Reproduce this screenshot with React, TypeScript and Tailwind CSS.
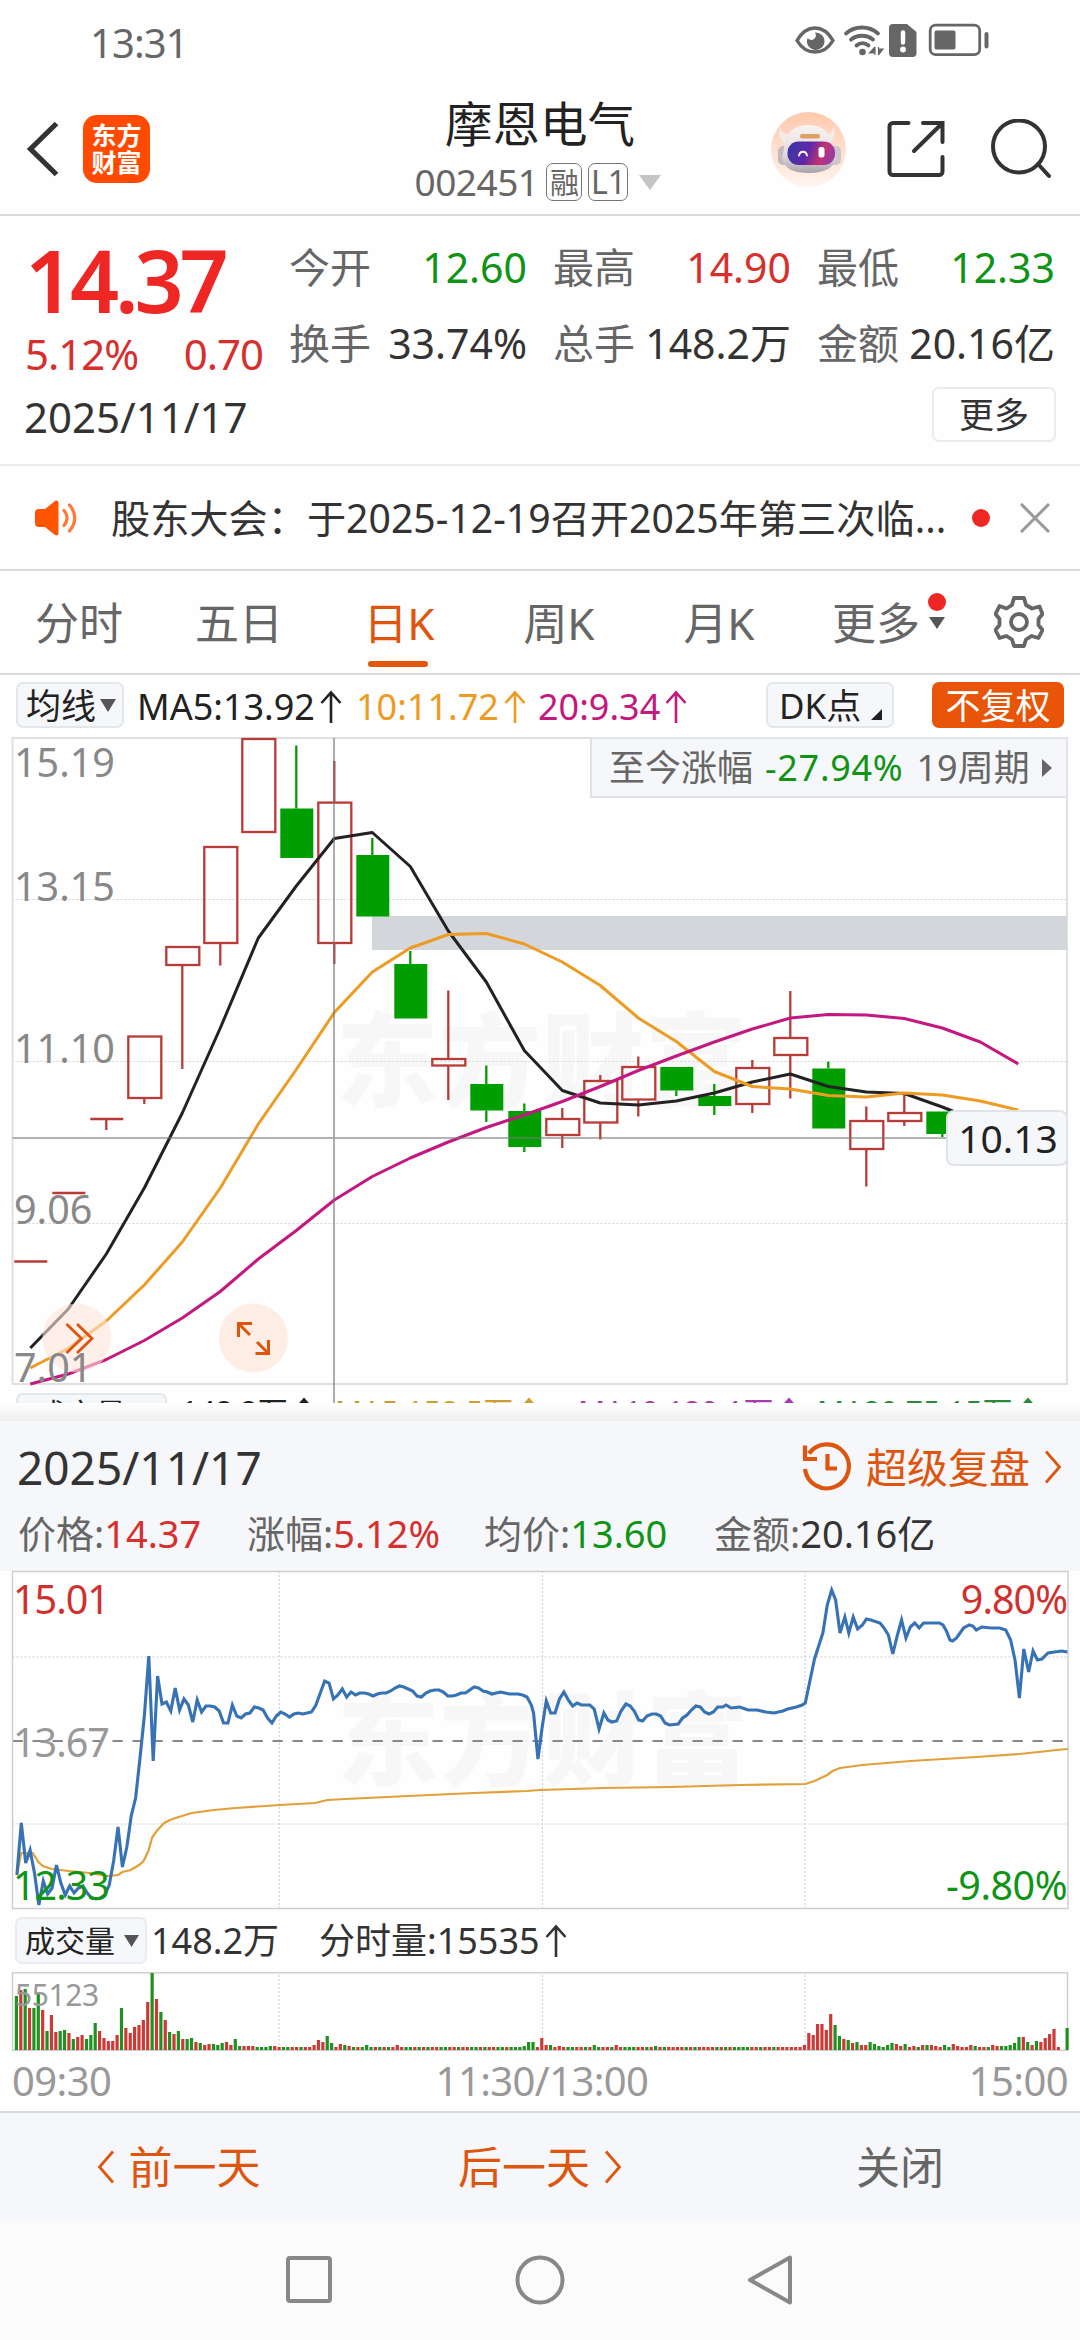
import React from 'react';

const RED = '#b93b38';
const GREEN = '#009e00';

const ArrowUp = () => (
  <svg viewBox="0 0 22 34" className="w-[22px] h-[34px] ml-[5px] shrink-0" fill="none" stroke="currentColor" strokeWidth={2.6}>
    <path d="M11 33V3M1.5 13L11 2.5L20.5 13" />
  </svg>
);

const ArrowLeft = () => (
  <svg viewBox="0 0 18 34" className="w-[18px] h-[34px]" fill="none" stroke="currentColor" strokeWidth={2.8}>
    <path d="M16 1.5L2.5 17L16 32.5" />
  </svg>
);

const ArrowRight = () => (
  <svg viewBox="0 0 18 34" className="w-[18px] h-[34px]" fill="none" stroke="currentColor" strokeWidth={2.8}>
    <path d="M2 1.5L15.5 17L2 32.5" />
  </svg>
);

const StatusBar = () => (
  <div className="h-[84px] flex items-center justify-between pl-[90px] pr-[90px] text-[#666]">
    <span className="text-[40px] tracking-[-0.9px] mt-px">13:31</span>
    <svg viewBox="0 0 196 36" className="w-[196px] h-[36px] -mt-[3px]" fill="none">
      <path d="M3 17.5C8 9 14 5 21 5s13 4 18 12.500c-5 8.500-11 11.500-18 11.500s-13-3-18-11.500z" stroke="#666" strokeWidth={3.4} />
      <path d="M21 9.500a4.500 4.500 0 0 1-7.500 5.500a8.800 8.800 0 1 0 7.500-5.500z" fill="#666" />
      <g stroke="#666" strokeWidth={3.8} strokeLinecap="round">
        <path d="M52 10.500c9-8 23-8 32 0" />
        <path d="M57 16.500c6.500-5 15.500-5 22 0" />
        <path d="M62.500 22.500c3.500-3 8.500-3 12 0" />
      </g>
      <circle cx="68.500" cy="29" r="3.300" fill="#666" />
      <path d="M81 24v8M81 24l-5.500 6h5.500M84.500 32v-8M84.500 32l4.500-6h-4.500" fill="#666" stroke="#666" strokeWidth={1.200} />
      <path d="M99 1h14l9.500 8v21a4 4 0 0 1-4 4h-19.500a4 4 0 0 1-4-4v-25a4 4 0 0 1 4-4z" fill="#666" />
      <path d="M109 9.500v10" stroke="#fff" strokeWidth={4.400} strokeLinecap="round" />
      <circle cx="109" cy="26.500" r="2.900" fill="#fff" />
      <rect x="136.200" y="2.200" width="49.500" height="29.500" rx="5.500" stroke="#666" strokeWidth={2.800} />
      <rect x="140.500" y="7.500" width="21" height="19" rx="2" fill="#666" />
      <rect x="190.500" y="9" width="4" height="16.500" rx="2" fill="#666" />
    </svg>
  </div>
);

const RobotIcon = () => (
  <svg viewBox="0 0 75 75" className="w-[75px] h-[75px]">
    <defs>
      <linearGradient id="halo" x1="0" y1="0" x2="0" y2="1">
        <stop offset="0" stopColor="#fec9ac" />
        <stop offset="1" stopColor="#fff5f0" />
      </linearGradient>
      <linearGradient id="visor" x1="0" y1="0" x2="1" y2="0.2">
        <stop offset="0" stopColor="#3438a6" />
        <stop offset="0.5" stopColor="#6127a8" />
        <stop offset="0.8" stopColor="#c2326f" />
        <stop offset="1" stopColor="#9c3aa0" />
      </linearGradient>
      <linearGradient id="shell" x1="0" y1="0" x2="0" y2="1">
        <stop offset="0" stopColor="#f8f3f2" />
        <stop offset="0.6" stopColor="#e4dde0" />
        <stop offset="1" stopColor="#aaa3ac" />
      </linearGradient>
    </defs>
    <circle cx="37.5" cy="37.500" r="37.500" fill="url(#halo)" />
    <path d="M9 15c-2 6 0 13 6 17l8-9c-8 1-12-2-14-8zM63 13c2 7 0 14-5 19l-8-9c8 1 12-3 13-10z" fill="#f3ebea" />
    <rect x="7" y="34" width="13" height="19" rx="5" fill="#c2babf" />
    <rect x="57" y="34" width="13" height="19" rx="5" fill="#cdc5cb" />
    <path d="M14.500 29C17 17 27 13 38 13s20 5 22.500 16l4.500 16c-1 11-12 16-27 16S13 57 11 46z" fill="url(#shell)" />
    <rect x="29" y="22" width="20" height="4.500" rx="2" fill="#e0a062" />
    <rect x="16.500" y="29.500" width="47.500" height="23.500" rx="11" fill="url(#visor)" />
    <path d="M28 43.500c1-5 7-5 8 0" fill="none" stroke="#fff" strokeWidth={1.800} strokeLinecap="round" />
    <rect x="47.500" y="35" width="6" height="10.500" rx="2.500" fill="#fff" />
  </svg>
);

const Header = () => (
  <div className="h-[132px] border-b-2 border-[#dcdcdc] grid grid-cols-[410px_256px_1fr]">
    <div className="flex items-center pl-[26px]">
      <svg viewBox="0 0 34 56" className="w-[34px] h-[56px]" fill="none" stroke="#333" strokeWidth={5.200}>
        <path d="M30.500 2.500L4.500 28L30.500 53.500" />
      </svg>
      <div className="ml-[23px] w-[67px] h-[68px] rounded-[14px] bg-[#ff4a00] text-white font-bold text-[25px] leading-[27px] flex flex-col items-center justify-center">
        <span>东方</span>
        <span>财富</span>
      </div>
    </div>
    <div className="flex flex-col items-center pt-[16px]">
      <div className="text-[47.500px] text-[#222] leading-[48px] ml-[4px] whitespace-nowrap">摩恩电气</div>
      <div className="mt-[14px] h-[40px] flex items-center text-[#666]">
        <span className="text-[37px] tracking-[-0.5px] -mt-px">002451</span>
        <span className="ml-[8px] w-[36px] h-[38px] rounded-[7px] border border-[#777] text-[29px] flex items-center justify-center">融</span>
        <span className="ml-[6px] w-[40px] h-[38px] rounded-[7px] border border-[#777] text-[32px] flex items-center justify-center">L1</span>
        <svg viewBox="0 0 22 15" className="ml-[11px] w-[22px] h-[15px]"><path d="M0 0h22l-11 15z" fill="#c4c4c4" /></svg>
      </div>
    </div>
    <div className="flex items-center justify-end pr-[29px]">
      <RobotIcon />
      <svg viewBox="0 0 58 58" className="ml-[41px] w-[58px] h-[58px]" fill="none" stroke="#333" strokeWidth={4} strokeLinecap="round">
        <path d="M21.500 3H6a3.500 3.500 0 0 0-3.500 3.500v45A3.500 3.500 0 0 0 6 55h46a3.500 3.500 0 0 0 3.500-3.500V37M36 3h19.500v19M55 3.500L27 31" />
      </svg>
      <svg viewBox="0 0 60 60" className="ml-[46px] w-[60px] h-[60px]" fill="none" stroke="#333" strokeWidth={4} strokeLinecap="round">
        <circle cx="28" cy="27.500" r="26" />
        <path d="M47 45L58 57" />
      </svg>
    </div>
  </div>
);

const quotes = [
  { label: '今开', value: '12.60', color: 'text-[#0f9415]' },
  { label: '最高', value: '14.90', color: 'text-[#d6302e]' },
  { label: '最低', value: '12.33', color: 'text-[#0f9415]' },
  { label: '换手', value: '33.74%', color: 'text-[#333]' },
  { label: '总手', value: '148.2万', color: 'text-[#333]' },
  { label: '金额', value: '20.16亿', color: 'text-[#333]' },
];

const QuotePanel = () => (
  <div className="h-[250px] border-b-2 border-[#ececec]">
    <div className="flex h-[171px]">
      <div className="w-[289px] pl-[25px]">
        <div className="mt-[21px] text-[86px] tracking-[-4.2px] font-semibold text-[#ee2624]">14.37</div>
        <div className="mt-[11px] h-[40px] flex items-center justify-between pr-[26px] text-[42px] text-[#d6302e]">
          <span className="tracking-[-1px]">5.12%</span>
          <span className="tracking-[-1px]">0.70</span>
        </div>
      </div>
      <div className="grid grid-cols-3 gap-x-[26px] w-[766px] h-[152px] mt-[13px]">
        {quotes.map((q) => (
          <div key={q.label} className="flex items-center justify-between whitespace-nowrap">
            <span className="text-[41px] text-[#666]">{q.label}</span>
            <span className={`text-[41px] ${q.color}`}>{q.value}</span>
          </div>
        ))}
      </div>
    </div>
    <div className="h-[55px] flex items-center justify-between pl-[24px] pr-[24px]">
      <span className="text-[42px] text-[#333] mt-[4px]">2025/11/17</span>
      <span className="w-[124px] h-[55px] rounded-[7px] border-2 border-[#ebebeb] text-[35px] text-[#333] flex items-center justify-center">更多</span>
    </div>
  </div>
);

const NoticeBar = () => (
  <div className="h-[105px] border-b-2 border-[#dcdcdc] flex items-center pl-[33px] whitespace-nowrap">
    <svg viewBox="0 0 44 38" className="w-[44px] h-[38px]" fill="none">
      <path d="M2 14a4 4 0 0 1 4-4h6L22 2c2-1 3.500 0 3.500 2v30c0 2-1.500 3-3.500 2l-10-8H6a4 4 0 0 1-4-4z" fill="#ff5500" />
      <path d="M31 11.500c4 4.500 4 10.500 0 15M36.500 6c7 8 7 18 0 26" stroke="#ff7a3a" strokeWidth={3.200} strokeLinecap="round" />
    </svg>
    <span className="ml-[34px] w-[835px] text-[39.200px] text-[#333]">股东大会：于2025-12-19召开2025年第三次临...</span>
    <span className="ml-[26px] w-[18px] h-[18px] rounded-full bg-[#ee2624]" />
    <svg viewBox="0 0 30 30" className="ml-[30px] w-[30px] h-[30px]" stroke="#999" strokeWidth={3}>
      <path d="M1 1L29 29M29 1L1 29" />
    </svg>
  </div>
);

const tabs = ['分时', '五日', '日K', '周K', '月K'];

const GearIcon = () => (
  <svg viewBox="0 0 50 52" className="w-[50px] h-[52px]" fill="none" stroke="#666" strokeWidth={3.800} strokeLinejoin="round">
    <path d="M20 2h10l2 7l6 3.500l7.500-2l3 7.500l-4 5v6l4 5l-4 8l-7-2l-5.500 3.500l-2 6.500H20l-2-6.500l-5.500-3.500l-7 2l-4-8l4-5v-6l-4-5l4-8l7 2.500l5.500-3.500z" />
    <circle cx="25" cy="26" r="8" />
  </svg>
);

const Tabs = () => (
  <div className="h-[104px] border-b-2 border-[#dcdcdc] flex text-[#666] text-[44px] whitespace-nowrap">
    {tabs.map((tab) => (
      <div key={tab} className={`w-[160px] h-full relative flex items-center justify-center pt-[2px] pr-[2px] ${tab === '日K' ? 'text-[#de560d]' : ''}`}>
        {tab}
        {tab === '日K' && <span className="absolute bottom-[6px] left-[48px] w-[60px] h-[6px] rounded-full bg-[#e4570b]" />}
      </div>
    ))}
    <div className="flex items-center pl-[32px]">
      <span className="pt-[2px]">更多</span>
      <div className="ml-[7px] w-[19px] h-full flex flex-col items-center pt-[22px]">
        <span className="w-[18px] h-[18px] rounded-full bg-[#ee2624]" />
        <svg viewBox="0 0 16 12" className="mt-[6px] w-[16px] h-[12px]"><path d="M0 0h16l-8 12z" fill="#555" /></svg>
      </div>
      <div className="ml-[48px]"><GearIcon /></div>
    </div>
  </div>
);

const IndicatorRow = () => (
  <div className="h-[61px] pt-[7px] flex whitespace-nowrap">
    <div className="ml-[16px] w-[108px] h-[46px] rounded-[7px] border-2 border-[#e4e7ea] bg-[#f6f7fa] flex items-center pl-[8px] text-[35px] text-[#222]">
      均线
      <svg viewBox="0 0 16 13" className="ml-[4px] w-[16px] h-[13px]"><path d="M0 0h16l-8 13z" fill="#555" /></svg>
    </div>
    <div className="ml-[13px] mt-[2px] flex items-center text-[36px] h-[46px]">
      <span className="w-[219px] flex items-center text-[#222]">MA5:13.92<ArrowUp /></span>
      <span className="w-[182px] flex items-center text-[#ed9b22]">10:11.72<ArrowUp /></span>
      <span className="flex items-center text-[#c3187e]">20:9.34<ArrowUp /></span>
    </div>
    <div className="ml-auto w-[128px] h-[46px] rounded-[7px] border-2 border-[#e4e7ea] bg-[#f6f7fa] flex items-center pl-[11px] text-[35px] text-[#222]">
      DK点
      <svg viewBox="0 0 11 11" className="ml-[10px] mt-[18px] w-[11px] h-[11px]"><path d="M11 0v11H0z" fill="#222" /></svg>
    </div>
    <div className="ml-[38px] mr-[16px] w-[132px] h-[46px] rounded-[7px] bg-[#e85408] text-white text-[35px] flex items-center justify-center">不复权</div>
  </div>
);

// [open/close top, bottom, high, low, rising] in chart pixels
const candles: [number, number, number, number, boolean][] = [
  [1261.5, 1261.5, 1261.5, 1261.5, true],
  [1193, 1193, 1193, 1193, true],
  [1119, 1119, 1119, 1130, true],
  [1036.5, 1098, 1036.5, 1104, true],
  [947, 965, 947, 1069, true],
  [847, 943, 847, 965.5, true],
  [739, 832, 739, 832, true],
  [808.5, 858, 745.5, 858, false],
  [802.6, 943, 761, 964, true],
  [855, 916.5, 838, 916.5, false],
  [964, 1018.5, 951, 1018.5, false],
  [1059, 1065.5, 990.5, 1100, true],
  [1084, 1110.5, 1065.5, 1122, false],
  [1111, 1147, 1103.5, 1152, false],
  [1119, 1135, 1108, 1148, true],
  [1081, 1122.5, 1075, 1139.5, true],
  [1067, 1099.5, 1056.5, 1116.5, true],
  [1067, 1090.5, 1067, 1096, false],
  [1096, 1106, 1084, 1115, false],
  [1068, 1104, 1060, 1113, true],
  [1038, 1055, 991, 1098.5, true],
  [1068.5, 1128.5, 1061.5, 1128.5, false],
  [1121, 1149, 1106.5, 1186.5, true],
  [1113, 1121, 1092, 1126, true],
  [1111.5, 1134, 1111.5, 1137, false],
];

const ma5 = [1348, 1309, 1254, 1188, 1113, 1028, 938, 886, 838.5, 832.5, 866.5, 931, 982, 1050.5, 1090.5, 1103, 1105, 1101, 1093, 1082, 1074, 1086.5, 1092, 1093.5, 1107, 1122];
const ma10 = [1368, 1348.5, 1321, 1285, 1242, 1188, 1124, 1069.5, 1012.5, 972, 948, 934.5, 933.5, 944, 962, 985.5, 1018, 1041.5, 1071.5, 1086.5, 1089, 1095.5, 1097, 1093, 1095, 1101, 1110];
const ma20 = [1384, 1374, 1359.5, 1340.5, 1318, 1291.5, 1259, 1230.5, 1200, 1176.5, 1158, 1142, 1127.5, 1115, 1101.5, 1086.5, 1070.5, 1056, 1042, 1029, 1018, 1014.5, 1015, 1018.5, 1028, 1042, 1064];

const candleX = (i: number) => 30.3 + i * 38;
const maPoints = (data: number[]) => data.map((y, i) => `${candleX(i)},${y}`).join(' ');

const KLineChart = () => (
  <div className="h-[667px] relative overflow-hidden">
    <svg viewBox="0 736 1080 667" className="w-[1080px] h-[667px] block">
      <text x="336" y="1099" fontWeight="900" fontSize="102" letterSpacing="1" fill="#f7f7f7">东方财富</text>
      <path d="M12.5 899.500H1067M12.5 1061.500H1067M12.5 1223.500H1067" stroke="#d4d4d4" strokeDasharray="2 2" />
      <rect x="12.500" y="738" width="1054.500" height="646" fill="none" stroke="#e0e0e0" strokeWidth={2} />
      <rect x="372" y="916" width="695" height="34" fill="#d3d7db" />
      <g fill="#888" fontSize="39.500">
        <text x="14" y="777">15.19</text>
        <text x="14" y="901">13.15</text>
        <text x="14" y="1062.500">11.10</text>
        <text x="14" y="1224">9.06</text>
      </g>
      {candles.map(([top, bottom, high, low, up], i) => {
        const x = candleX(i);
        return (
          <g key={i} stroke={up ? RED : GREEN} strokeWidth={2.3}>
            {high < top && <path d={`M${x} ${high}V${top}`} />}
            {low > bottom && <path d={`M${x} ${bottom}V${low}`} />}
            {top === bottom ? (
              <path d={`M${x - 16} ${top}h33`} />
            ) : (
              <rect x={x - 16} y={top} width={33} height={bottom - top} fill={up ? 'none' : GREEN} strokeWidth={up ? 2.3 : 0} />
            )}
          </g>
        );
      })}
      <g fill="none" strokeWidth={3} strokeLinejoin="round">
        <polyline points={maPoints(ma5)} stroke="#222" />
        <polyline points={maPoints(ma10)} stroke="#ed9b22" />
        <polyline points={maPoints(ma20)} stroke="#c3187e" />
      </g>
      <path d="M12.5 1138H950M334 738V1403" stroke="#777" strokeOpacity="0.75" strokeWidth={1.600} />
      <circle cx="76.800" cy="1338" r="34.500" fill="#fde4d8" fillOpacity="0.600" />
      <circle cx="253.400" cy="1338" r="34.500" fill="#fde9df" fillOpacity="0.800" />
      <path d="M66.500 1324L81.500 1338.500L66.500 1353M77 1324L92 1338.500L77 1353" fill="none" stroke="#de560d" strokeWidth={2.800} />
      <path d="M238.500 1337V1323.500H252M239 1324L250 1335M255.500 1353.500H268.500V1340M268 1353L257 1342" fill="none" stroke="#de560d" strokeWidth={3} />
      <text x="14" y="1382" fontSize="39.500" fill="#888">7.01</text>
    </svg>
    <div className="absolute top-px right-[12px] w-[478px] h-[61px] bg-[#f6f7fa] border-2 border-[#e2e3e5] flex items-center pl-[17px] text-[36px] text-[#666] whitespace-nowrap">
      <span>至今涨幅</span>
      <span className="ml-[12px] tracking-[0.7px] text-[#0f9415]">-27.94%</span>
      <span className="ml-[13px]">19周期</span>
      <svg viewBox="0 0 10 18" className="ml-[12px] w-[10px] h-[18px]"><path d="M0 0l10 9l-10 9z" fill="#666" /></svg>
    </div>
    <div className="absolute top-[374px] right-[12px] w-[122px] h-[56px] rounded-[8px] bg-[#f6f7fa] border-2 border-[#e0e4e8] flex items-center justify-center pb-[2px] pl-[2px] text-[39px] text-[#222]">10.13</div>
    {/* volume header, cut off by the day sheet below */}
    <div className="absolute top-[657px] left-0 w-full flex items-start text-[30px] whitespace-nowrap">
      <span className="ml-[16px] w-[151px] h-[46px] rounded-[7px] border-2 border-[#e4e7ea] bg-[#f6f7fa] pl-[18px] pt-[4px] text-[#222]">成交量</span>
      <span className="ml-[14px] w-[154px] mt-[4px] flex text-[#222]">148.2万<ArrowUp /></span>
      <span className="w-[243px] mt-[4px] flex text-[#cf9c2e]">MA5:158.5万<ArrowUp /></span>
      <span className="w-[239px] mt-[4px] flex text-[#a83cae]">MA10:120.1万<ArrowUp /></span>
      <span className="mt-[4px] flex text-[#2b8a35]">MA20:75.15万<ArrowUp /></span>
    </div>
  </div>
);

const dayStats = [
  { label: '价格:', value: '14.37', color: 'text-[#d6302e]', width: 'w-[229px]' },
  { label: '涨幅:', value: '5.12%', color: 'text-[#d6302e]', width: 'w-[237px]' },
  { label: '均价:', value: '13.60', color: 'text-[#0f9415]', width: 'w-[230px]' },
  { label: '金额:', value: '20.16亿', color: 'text-[#333]', width: '' },
];

const SheetHeader = () => (
  <>
    <div className="h-[18px] bg-gradient-to-b from-white to-[#efeff0]" />
    <div className="h-[150px] bg-[#f6f7fa] whitespace-nowrap">
      <div className="h-[92px] flex items-center pl-[17px] pr-[18px]">
        <span className="text-[46px] text-[#333]">2025/11/17</span>
        <div className="ml-auto flex items-center text-[#de560d] text-[41px]">
          <svg viewBox="0 0 50 50" className="w-[50px] h-[50px] mr-[14px]" fill="none" stroke="currentColor" strokeWidth={4.200}>
            <path d="M7 11.500A22 22 0 1 1 3 27" />
            <path d="M3 3.500V17H15" />
            <path d="M25.500 12V26.500H35" />
          </svg>
          <span>超级复盘</span>
          <span className="ml-[14px]"><ArrowRight /></span>
        </div>
      </div>
      <div className="flex pl-[18px] h-[42px] items-center -mt-px text-[38px]">
        {dayStats.map((s) => (
          <span key={s.label} className={`${s.width} text-[#666]`}>
            {s.label}
            <span className={s.color}>{s.value}</span>
          </span>
        ))}
      </div>
    </div>
  </>
);

// [minute, y] pairs
const priceLine: [number, number][] = [
  [1, 304], [2, 252], [3, 292], [4, 279], [5, 302], [6, 334], [7, 310], [8, 323], [9, 317], [10, 294], [11, 312], [12, 324],
  [13, 315], [14, 322], [15, 317], [16, 315], [17, 322], [18, 327], [19, 328], [20, 327], [21, 324], [22, 314], [23, 290], [24, 256],
  [25, 296], [26, 276], [27, 245], [28, 227], [29, 187], [30, 144], [31, 85], [32, 190], [33, 105], [34, 133], [35, 131], [36, 140],
  [37, 117], [38, 139], [39, 128], [40, 134], [41, 151], [42, 129], [43, 141], [44, 135], [45, 135], [46, 136], [47, 140], [48, 152],
  [49, 152], [50, 134], [51, 145], [52, 147], [53, 143], [54, 142], [55, 136], [56, 137], [57, 139], [58, 147], [59, 152], [60, 145],
  [61, 141], [62, 143], [63, 146], [64, 143], [65, 142], [66, 143], [67, 142], [68, 141], [69, 134], [70, 122], [71, 110], [72, 112],
  [73, 128], [74, 124], [75, 118], [76, 126], [77, 121], [78, 124], [79, 122], [80, 122], [81, 123], [82, 125], [83, 123], [84, 122],
  [85, 122], [86, 120], [87, 117], [88, 115], [89, 116], [90, 118], [91, 120], [92, 125], [93, 126], [94, 122], [95, 120], [96, 119],
  [97, 119], [98, 121], [99, 125], [100, 125], [101, 124], [102, 122], [103, 122], [104, 119], [105, 116], [106, 117], [107, 120],
  [108, 121], [109, 123], [110, 122], [111, 121], [112, 122], [113, 123], [114, 123], [115, 123], [116, 124], [117, 126], [118, 134],
  [118.5, 142], [119.5, 188], [120.5, 155], [121.4, 130], [122.4, 142], [123.4, 142], [124.4, 128], [125.4, 121], [126.4, 129],
  [127.4, 135], [128.4, 132], [129.4, 134], [131.3, 134], [132.3, 138], [133.4, 158], [134.5, 142], [135.4, 149], [136.3, 151],
  [137.4, 150], [138.4, 140], [139.5, 133], [140.5, 135], [141.4, 140], [142.4, 149], [143.3, 150], [144.3, 145], [145.4, 143],
  [146.4, 143], [147.4, 145], [148.4, 152], [149.4, 154], [151.4, 153], [152.4, 147], [153.4, 144], [154.4, 139], [155.4, 135],
  [156.4, 136], [157.4, 141], [158.4, 143], [159.4, 141], [160.4, 136], [161.5, 136], [162.3, 134], [163.4, 137], [165.4, 136],
  [167.3, 139], [169.3, 139], [171.3, 141], [173.2, 142], [175.2, 140], [176.3, 138], [178.3, 136], [179.6, 134], [180.3, 132],
  [181.3, 111], [182.4, 88], [184.3, 62], [185.3, 34], [186.3, 19], [187.2, 29], [188.2, 62], [189.3, 46], [190.2, 62], [191.2, 46],
  [192.2, 58], [193.3, 54], [194.2, 48], [195.2, 49], [197.3, 52], [198.2, 57], [199.2, 64], [200.2, 83], [201.2, 65], [202.2, 49],
  [203.2, 67], [204.2, 56], [205.2, 52], [206.2, 57], [207.2, 52], [210.8, 52], [211.6, 54], [212.4, 60], [213.2, 69], [213.8, 70],
  [214.7, 67], [216.3, 57], [217.6, 54], [218.4, 55], [219.2, 59], [220.4, 56], [222.6, 57], [224.5, 57], [225.9, 59], [227, 69],
  [228, 89], [229, 127], [230, 78], [231.1, 101], [232.1, 80], [233.1, 89], [234.1, 88], [235.5, 82], [237, 81], [238.6, 80], [239.9, 81],
];

const averageLine: [number, number][] = [
  [1, 304], [2, 282], [4.6, 282], [5.9, 291], [6.9, 295], [8.9, 298], [12.8, 300], [17.5, 302], [21.5, 305], [24, 304], [25, 301],
  [26.9, 299], [28.8, 294], [29.8, 290], [30.9, 280], [31.8, 266], [32.8, 260], [34.5, 252], [35.8, 249], [37.8, 246], [40.8, 242],
  [45.8, 239], [50.7, 237], [60.8, 234], [68.8, 232], [71.6, 229], [75.7, 228], [90, 225], [105, 222], [117, 220], [120, 219],
  [134.5, 217], [149.7, 216], [165.4, 214], [180.3, 213], [182.4, 210], [185.3, 204], [186.5, 200], [188.2, 197], [193.3, 194],
  [204.2, 190], [219.2, 186], [229, 183], [235.5, 180], [237.4, 179], [240, 178],
];

const minutePoints = (data: [number, number][]) => data.map(([m, y]) => `${12.5 + m * 4.397},${y}`).join(' ');

const MinuteChart = () => (
  <svg viewBox="0 0 1080 338" className="w-[1080px] h-[338px] block overflow-visible">
    <text x="337" y="207" fontWeight="900" fontSize="102" letterSpacing="1" fill="#f7f7f7">东方财富</text>
    <path d="M12.5 86H1067M12.5 253H1067M279.300 0V338M542.400 0V338M805 0V338" stroke="#ccc" strokeDasharray="2 2" />
    <path d="M12.5 170H1067" stroke="#888" strokeWidth={2} strokeDasharray="10.300 9.700" />
    <rect x="12.500" y="0.500" width="1055.500" height="337" fill="none" stroke="#ccc" strokeWidth={1.400} />
    <polyline points={minutePoints(averageLine)} fill="none" stroke="#e0a03a" strokeWidth={2.200} />
    <polyline points={minutePoints(priceLine)} fill="none" stroke="#3672b4" strokeWidth={3.100} />
    <g fontSize="39.500" letterSpacing="-1">
      <text x="13" y="43" fill="#d0312f">15.01</text>
      <text x="13" y="185.500" fill="#999">13.67</text>
      <text x="13" y="328.500" fill="#0f9415">12.33</text>
      <text x="1067" y="43" fill="#d0312f" textAnchor="end">9.80%</text>
      <text x="1067" y="328.500" fill="#0f9415" textAnchor="end" letterSpacing="-0.500">-9.80%</text>
    </g>
  </svg>
);

// one entry per minute, g = falling, r = rising
const volumeBars: string[] = (
  'g54 r60 g61 r42 g42 g57 r40 g19 r35 r18 g19 g20 r17 g11 r13 r15 g11 g15 g27 r19 r12 r9 r9 r15 g42 r22 r17 r23 r25 r30 r48 g77 r51 g38 r30 g18 r16 g19 r11 ' +
  'g11 g12 r8 g7 r5 r6 g6 g5 g7 r8 r5 g11 g4 r4 r4 r4 g3 g3 g3 g4 r4 r3 g3 g3 r3 r3 g3 r3 r3 r5 r10 r8 g14 g7 r3 r6 g5 r4 g3 r3 ' +
  'g3 g5 g3 r3 g3 r3 g3 r3 r5 r3 g3 g3 r3 g3 r3 g3 r3 r3 g3 g3 r3 r3 g3 r3 r3 g3 g3 r3 g3 r3 r3 g3 g3 r3 g3 g3 g3 g4 g8 g8 ' +
  'r3 r12 r5 g5 r3 r4 r3 g3 g3 r3 r3 g3 r3 g5 g3 r3 r3 g3 r5 r3 g3 g3 g3 r3 r3 g3 r3 g4 r3 g3 r3 r3 r3 r3 g3 r3 g3 r3 r3 ' +
  'r3 r3 g3 r3 g3 r3 g3 g3 g3 g3 r3 r3 g3 r3 r3 g3 r3 r3 r3 r3 r3 r3 r5 r17 r15 r26 r26 r20 r36 g25 g14 r11 g10 r7 g8 r5 r5 g8 g6 g4 g3 g5 ' +
  'g7 r6 r4 g6 r3 r4 g3 r5 g5 r5 r4 r3 g5 g3 r6 r4 r3 r3 r5 g4 r3 r3 g3 r5 r4 g4 g4 g5 g7 g13 r13 g8 r5 g9 r8 r12 r16 r21 r3 g0 g22'
).split(' ');

const VolumeChart = () => (
  <svg viewBox="0 0 1080 79" className="w-[1080px] h-[79px] block">
    <path d="M279 3V78M542.400 3V78M805 3V78" stroke="#ccc" strokeDasharray="2 2" />
    <rect x="12.500" y="0.800" width="1055" height="77.500" fill="none" stroke="#ccc" strokeWidth={1.400} />
    {volumeBars.map((bar, i) => {
      const h = Number(bar.slice(1));
      return <rect key={i} x={14.8 + i * 4.378} y={78 - h} width={3.2} height={h} fill={bar[0] === 'g' ? '#1f9120' : '#cc3a38'} />;
    })}
    <text x="15" y="34" fontSize="30" fill="#999" letterSpacing="-0.4">55123</text>
  </svg>
);

const DaySheet = () => (
  <div>
    <SheetHeader />
    <MinuteChart />
    <div className="h-[63px] flex items-center text-[36px] text-[#333] whitespace-nowrap">
      <div className="ml-[15px] w-[132px] h-[47px] rounded-[7px] border-2 border-[#e9ebee] bg-[#f6f7fa] flex items-center pl-[8px] text-[30px] text-[#222]">
        成交量
        <svg viewBox="0 0 15 12" className="ml-[9px] w-[15px] h-[12px]"><path d="M0 0h15l-7.500 12z" fill="#555" /></svg>
      </div>
      <span className="ml-[4px] w-[168px]">148.2万</span>
      <span className="flex items-center">分时量:15535<ArrowUp /></span>
    </div>
    <VolumeChart />
    <div className="h-[60px] px-[12px] grid grid-cols-3 items-center text-[40px] tracking-[-0.6px] text-[#999]">
      <span>09:30</span>
      <span className="text-center pl-[4px]">11:30/13:00</span>
      <span className="text-right">15:00</span>
    </div>
    <div className="h-[109px] bg-[#f6f7fa] border-t-2 border-[#d6dad8] grid grid-cols-3 items-center text-[44px] text-[#de560d]">
      <div className="flex items-center justify-center gap-[14px] pr-[3px]"><ArrowLeft />前一天</div>
      <div className="flex items-center justify-center gap-[14px]">后一天<ArrowRight /></div>
      <div className="text-center text-[#666] text-[44px]">关闭</div>
    </div>
  </div>
);

const NavBar = () => (
  <div className="h-[120px] bg-[#fbfbfb] flex items-center justify-center gap-[182px]">
    <svg viewBox="0 0 48 50" className="w-[48px] h-[50px]" fill="none" stroke="#888" strokeWidth={4}>
      <rect x="3" y="3" width="42" height="43" rx="2" />
    </svg>
    <svg viewBox="0 0 50 50" className="w-[50px] h-[50px]" fill="none" stroke="#888" strokeWidth={4}>
      <circle cx="25" cy="25" r="22.500" />
    </svg>
    <svg viewBox="0 0 48 50" className="w-[48px] h-[50px]" fill="none" stroke="#888" strokeWidth={4} strokeLinejoin="round">
      <path d="M43 2.500V47.500L3 25z" />
    </svg>
  </div>
);

const App: React.FC = () => {
  return (
    <div className="w-[1080px] h-[2340px] overflow-hidden bg-[#fefefe] leading-none font-['Noto_Sans','Noto_Sans_CJK_SC',sans-serif]">
      <StatusBar />
      <Header />
      <QuotePanel />
      <NoticeBar />
      <Tabs />
      <IndicatorRow />
      <KLineChart />
      <DaySheet />
      <NavBar />
    </div>
  );
};

export default App;
